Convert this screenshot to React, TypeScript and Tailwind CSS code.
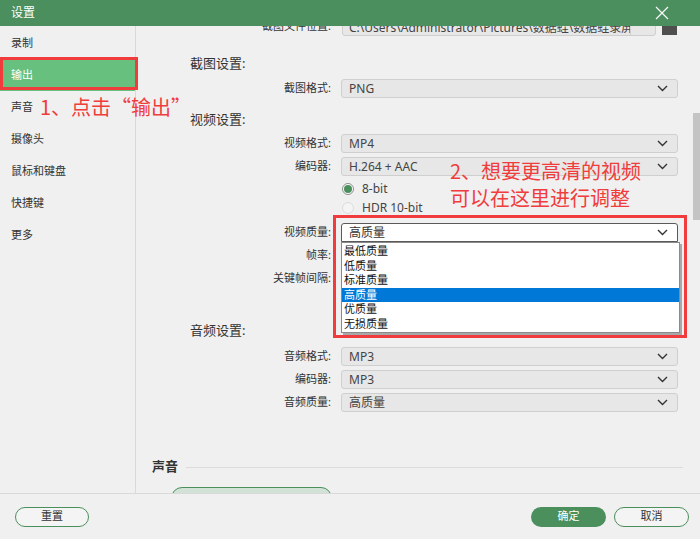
import React from "react";

const font = "font-['Noto_Sans','Noto_Sans_CJK_SC',sans-serif]";

const navItems = ["录制", "输出", "声音", "摄像头", "鼠标和键盘", "快捷键", "更多"];
const qualityOptions = ["最低质量", "低质量", "标准质量", "高质量", "优质量", "无损质量"];

function Chevron() {
    return (
        <svg width="11" height="7" viewBox="0 0 11 7" className="shrink-0">
            <path d="M1 1 L5.5 5.5 L10 1" fill="none" stroke="#333" strokeWidth="1.4" />
        </svg>
    );
}

function Select({ value, open }: { value: string; open?: boolean }) {
    return (
        <div
            className={`flex h-[19px] items-center justify-between pl-[7px] pr-[9px] text-[12px] ${open
                ? "rounded-t-[3px] border border-[#5a5a5a] bg-white text-[#333]"
                : "rounded-[3px] border border-[#cfcfcf] bg-[#e7e7e7] text-[#444]"
                }`}
        >
            <span>{value}</span>
            <Chevron />
        </div>
    );
}

function Row({ label, children }: { label: string; children: React.ReactNode }) {
    return (
        <div className="flex h-[23px] items-center">
            <div className="w-[195px] text-right text-[11px] text-[#333]">{label}</div>
            <div className="ml-[10px] w-[337px]">{children}</div>
        </div>
    );
}

function Heading({ text, className = "" }: { text: string; className?: string }) {
    return (
        <div className={`ml-[54px] flex h-[24px] items-center text-[13px] text-[#333] ${className}`}>
            {text}
        </div>
    );
}

function Radio({ label, checked }: { label: string; checked?: boolean }) {
    return (
        <div className="ml-[206px] flex h-[19px] items-center gap-[8px]">
            <span
                className={`flex h-[12px] w-[12px] items-center justify-center rounded-full border ${checked ? "border-[#8c8c8c] bg-white" : "border-[#dcdcdc] bg-[#f4f4f4]"
                    }`}
            >
                {checked && <span className="h-[8px] w-[8px] rounded-full bg-[#4a8f5c]" />}
            </span>
            <span className="text-[12px] text-[#444]">{label}</span>
        </div>
    );
}

export default function App() {
    return (
        <div className={`relative flex h-[539px] w-[700px] flex-col overflow-hidden bg-[#f0f0f0] ${font}`}>
            {/* title bar */}
            <div className="z-10 flex h-[26px] shrink-0 items-center justify-between bg-[#4a8f5d] pl-[11px] pr-[31px]">
                <span className="text-[12px] text-white">设置</span>
                <svg width="14" height="14" viewBox="0 0 14 14">
                    <path d="M1 1 L13 13 M13 1 L1 13" stroke="white" strokeWidth="1.2" />
                </svg>
            </div>

            <div className="flex min-h-0 flex-1">
                {/* sidebar */}
                <div className="w-[136px] shrink-0 border-r border-[#d9d9d9] pt-[1px]">
                    {navItems.map((item) => (
                        <div
                            key={item}
                            className={`flex h-[32px] items-center pl-[11px] text-[11px] ${item === "输出" ? "bg-[#67c07e] text-white" : "text-[#333]"
                                }`}
                        >
                            {item}
                        </div>
                    ))}
                </div>

                {/* content (scrolled a little) */}
                <div className="flex min-w-0 flex-1 overflow-hidden">
                    <div className="-mt-[9px] flex-1">
                        <div className="flex h-[19px] items-center">
                            <div className="w-[195px] text-right text-[11px] text-[#333]">截图文件位置:</div>
                            <div className="ml-[11px] flex h-[18px] w-[314px] overflow-hidden rounded-[3px] border border-[#cfcfcf] bg-[#e7e7e7]">
                                <span className="flex-1 overflow-hidden whitespace-nowrap pl-[6px] text-[12px] leading-[17px] text-[#444]">
                                    C:\Users\Administrator\Pictures\数据蛙\数据蛙录屏软件
                                </span>
                                <span className="w-[25px] border-l border-[#cfcfcf]" />
                            </div>
                            <div className="ml-[6px] mt-[2px] h-[14px] w-[15px] bg-[#4f4f4f]" />
                        </div>

                        <Heading text="截图设置:" className="mt-[16px]" />
                        <div className="mt-[1px]">
                            <Row label="截图格式:">
                                <Select value="PNG" />
                            </Row>
                        </div>

                        <Heading text="视频设置:" className="mt-[8px]" />
                        <Row label="视频格式:">
                            <Select value="MP4" />
                        </Row>
                        <Row label="编码器:">
                            <Select value="H.264 + AAC" />
                        </Row>
                        <div className="mt-[1px]">
                            <Radio label="8-bit" checked />
                            <Radio label="HDR 10-bit" />
                        </div>
                        <div className="mt-[4px]">
                            <Row label="视频质量:">
                                <div className="relative">
                                    <Select value="高质量" open />
                                    <div className="absolute left-0 top-full z-20 w-[339px] border border-[#8a8a8a] bg-white py-[1px] shadow-[2px_2px_0_#a8a8a8]">
                                        {qualityOptions.map((opt) => (
                                            <div
                                                key={opt}
                                                className={`h-[14.5px] pl-[2px] text-[11px] leading-[14.5px] ${opt === "高质量" ? "bg-[#0078d7] text-white" : "text-[#111]"
                                                    }`}
                                            >
                                                {opt}
                                            </div>
                                        ))}
                                    </div>
                                </div>
                            </Row>
                        </div>
                        {/* these two sit under the open list */}
                        <Row label="帧率:">
                            <Select value="" />
                        </Row>
                        <Row label="关键帧间隔:">
                            <Select value="" />
                        </Row>

                        <Heading text="音频设置:" className="mt-[29px]" />
                        <div className="mt-[2px]">
                            <Row label="音频格式:">
                                <Select value="MP3" />
                            </Row>
                            <Row label="编码器:">
                                <Select value="MP3" />
                            </Row>
                            <Row label="音频质量:">
                                <Select value="高质量" />
                            </Row>
                        </div>

                        <div className="ml-[16px] mt-[41px] flex h-[24px] items-center gap-[8px]">
                            <span className="text-[13px] font-bold text-[#333]">声音</span>
                            <span className="mr-[10px] h-px flex-1 bg-[#dcdcdc]" />
                        </div>
                        <div className="ml-[35px] mt-[8px] flex h-[22px] w-[161px] justify-center rounded-full border border-[#4a8f5c] bg-[#d2e2d7] pt-[3px] text-[11px] text-[#333]">
                            声音设置
                        </div>
                    </div>

                    {/* scrollbar */}
                    <div className="w-[7px] shrink-0">
                        <div className="mt-[87px] h-[107px] bg-[#c4c4c4]" />
                    </div>
                </div>
            </div>

            {/* footer */}
            <div className="flex h-[46px] shrink-0 items-center justify-between border-t border-[#d9d9d9] pl-[15px] pr-[11px]">
                <button className="h-[20px] w-[74px] rounded-full border-[1.5px] border-[#4a8f5c] bg-[#f4f4f4] text-[11px] text-[#333]">
                    重置
                </button>
                <div className="flex gap-[8px]">
                    <button className="h-[20px] w-[75px] rounded-full bg-[#4a8f5c] text-[11px] text-white">
                        确定
                    </button>
                    <button className="h-[20px] w-[75px] rounded-full border-[1.5px] border-[#4a8f5c] bg-[#f4f4f4] text-[11px] text-[#333]">
                        取消
                    </button>
                </div>
            </div>

            {/* annotations */}
            <div className="absolute left-0 top-[57px] h-[33px] w-[138px] border-[3px] border-[#f03c3c]" />
            <div className="absolute left-[333px] top-[215px] h-[123px] w-[354px] border-[3px] border-[#f03c3c]" />
            <div className="absolute left-[40px] top-[93px] font-['Noto_Sans_CJK_SC',sans-serif] text-[20px] leading-[28px] text-[#f03c3c]">
                1、点击“输出”
            </div>
            <div className="absolute left-[450px] top-[157px] font-['Noto_Sans_CJK_SC',sans-serif] text-[20px] leading-[27px] text-[#f03c3c]">
                <div>2、想要更高清的视频</div>
                <div>可以在这里进行调整</div>
            </div>
        </div>
    );
}
